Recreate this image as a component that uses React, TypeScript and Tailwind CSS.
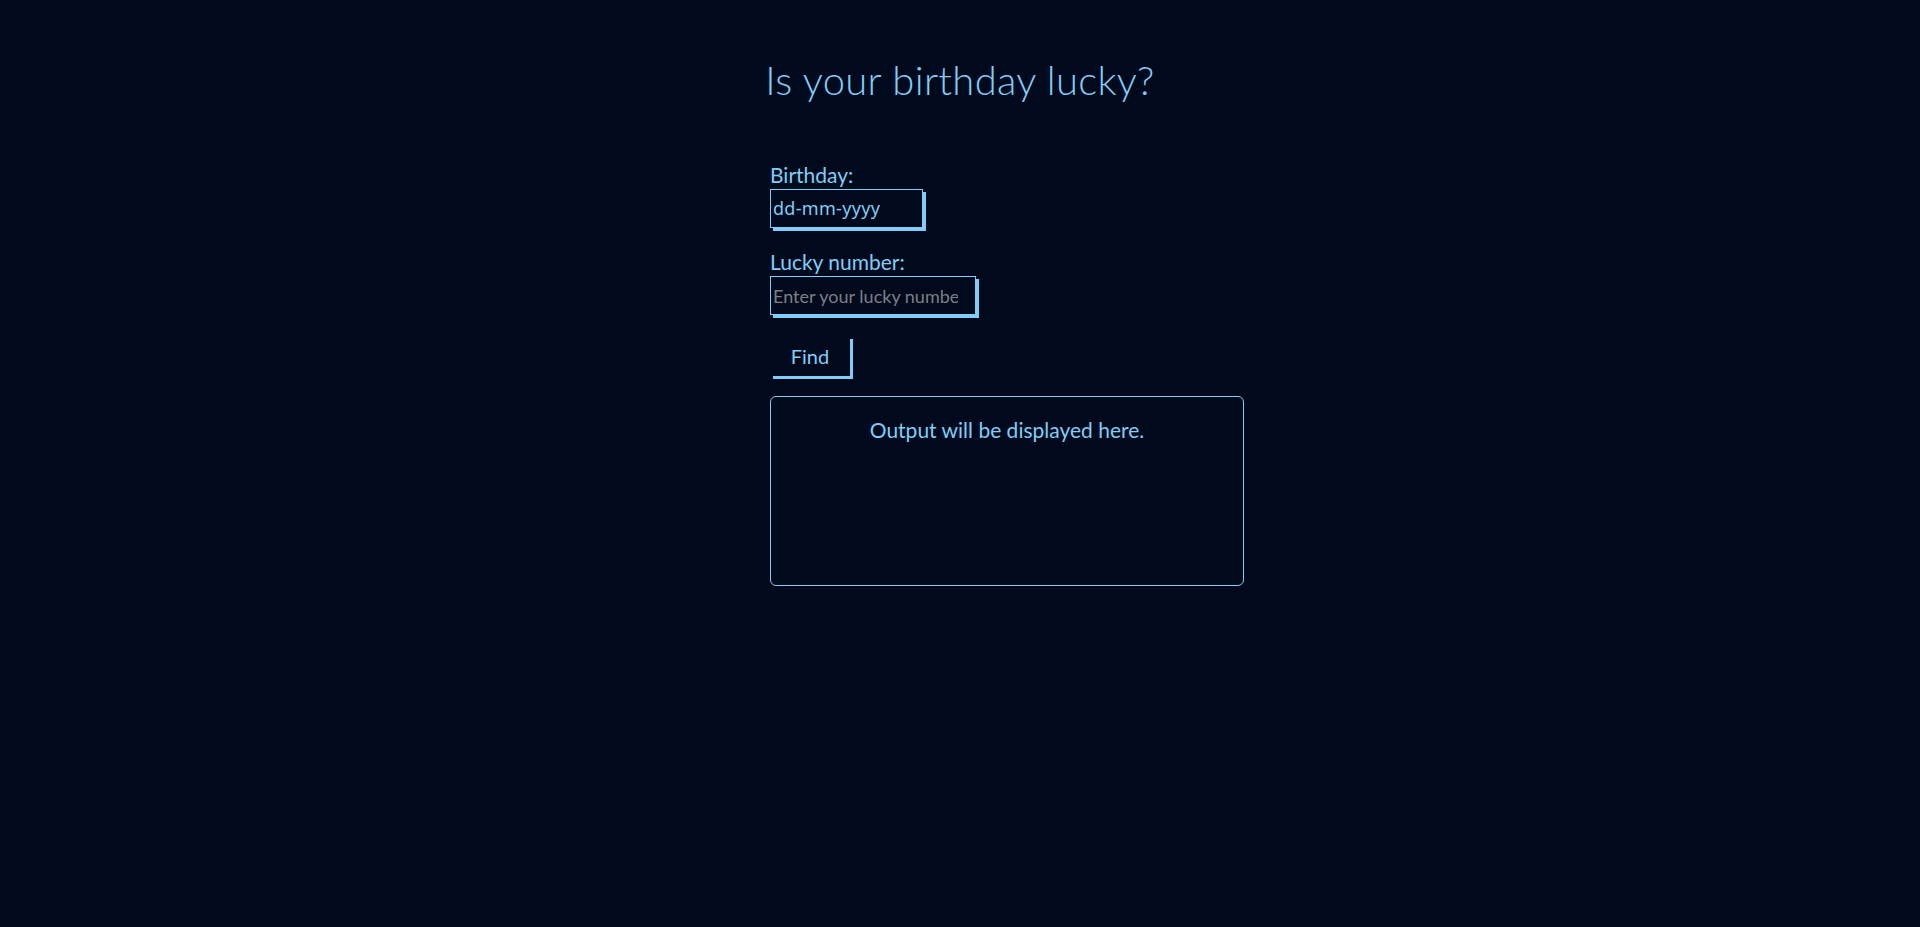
import React from 'react';

const App: React.FC = () => {
  return (
    <div className="min-h-[927px] w-full bg-[#000a1c] text-[#81cdf8] font-['Lato','Open_Sans',sans-serif]">
      <h1 className="pt-[56px] text-center text-[40px] leading-[48px] font-light tracking-[0.3px] font-['Lato',sans-serif]">
        Is your birthday lucky?
      </h1>

      <div className="mx-auto mt-[59px] w-[568px] pl-[94px]">
        <label className="block text-[21px] leading-[24px]">Birthday:</label>
        <div className="mt-[2px] flex h-[39px] w-[153px] items-center border border-[#81cdf8] px-[2px] shadow-[3px_3px_0_#81cdf8]">
          <span className="text-[18px] tracking-[0.3px] text-[#81cdf8] font-['Noto_Sans',sans-serif]">dd-mm-yyyy</span>
        </div>

        <label className="mt-[22px] block text-[21px] leading-[24px]">Lucky number:</label>
        <input
          type="number"
          placeholder="Enter your lucky number"
          className="mt-[2px] block h-[39px] w-[206px] border border-[#81cdf8] bg-transparent px-[2px] text-[18px] text-[#81cdf8] outline-none shadow-[3px_3px_0_#81cdf8] placeholder:text-[#7d7f86]"
        />

        <button className="mt-[21px] block h-[40px] w-[80px] text-[20px] text-[#81cdf8] shadow-[3px_3px_0_#81cdf8]">
          Find
        </button>

        <div className="mt-[20px] h-[190px] w-[474px] rounded-[6px] border border-[#8fc9f0] pt-[17px] text-center text-[21px]">
          Output will be displayed here.
        </div>
      </div>
    </div>
  );
};

export default App;
